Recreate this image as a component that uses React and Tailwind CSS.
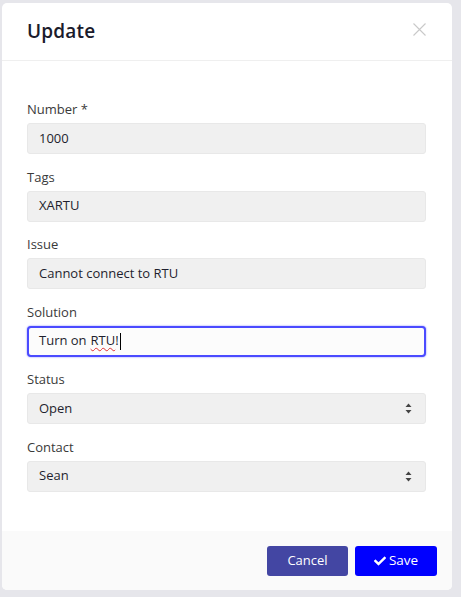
import { FaCheck } from 'react-icons/fa';

const Field = ({ label, children }) => (
  <div className="mb-[13.5px]">
    <label className="block h-[18px] leading-[18px] text-[13px] text-[#3a3a3a]">{label}</label>
    <div className="mt-[5px]">{children}</div>
  </div>
);

const TextBox = ({ value }) => (
  <div className="h-[31px] rounded-[3px] border border-[#e8e8e8] bg-[#f0f0f0] px-[11px] flex items-center text-[13px] text-[#1f1f2e]">
    {value}
  </div>
);

const SelectBox = ({ value }) => (
  <div className="h-[31px] rounded-[3px] border border-[#e8e8e8] bg-[#f0f0f0] pl-[11px] pr-[13px] flex items-center justify-between text-[13px] text-[#1f1f2e]">
    <span>{value}</span>
    <svg width="7" height="11" viewBox="0 0 7 11">
      <path d="M3.5 0.5 L6.5 4 L0.5 4 Z" fill="#444" />
      <path d="M3.5 10.5 L6.5 7 L0.5 7 Z" fill="#444" />
    </svg>
  </div>
);

export default function App() {
  return (
    <div
      className="h-[597px] w-[461px] bg-[#e6e6eb] pt-[3px] pl-[2px] overflow-hidden"
      style={{ fontFamily: '"Open Sans", "Noto Sans", sans-serif' }}
    >
      <div className="w-[450px] h-[587px] bg-white rounded-[5px] flex flex-col overflow-hidden">
        <div className="h-[58px] shrink-0 flex items-center justify-between pl-[25px] pr-[26px] border-b border-[#efefef]">
          <h2 className="text-[19px] font-semibold tracking-[0.2px] text-[#1b1b2b]">Update</h2>
          <svg width="13" height="13" viewBox="0 0 13 13" className="-mt-[5px]">
            <path d="M0.5 0.5 L12.5 12.5 M12.5 0.5 L0.5 12.5" stroke="#c9c9c9" strokeWidth="1.1" />
          </svg>
        </div>

        <div className="flex-1 pl-[25px] pr-[26px] pt-[39px]">
          <Field label="Number *">
            <TextBox value="1000" />
          </Field>
          <Field label="Tags">
            <TextBox value="XARTU" />
          </Field>
          <Field label="Issue">
            <TextBox value="Cannot connect to RTU" />
          </Field>
          <Field label="Solution">
            <div className="h-[31px] rounded-[4px] border-2 border-[#4b4bff] bg-[#fcfcfc] shadow-[0_0_2px_#8080ff] px-[10px] flex items-center text-[13px] text-[#1f1f2e]">
              Turn on{' '}
              <span className="ml-[4px] underline decoration-wavy decoration-[#e03030] decoration-1 underline-offset-2">RTU</span>
              !
              <span className="inline-block w-px h-[17px] bg-black ml-[1px]" />
            </div>
          </Field>
          <Field label="Status">
            <SelectBox value="Open" />
          </Field>
          <Field label="Contact">
            <SelectBox value="Sean" />
          </Field>
        </div>

        <div className="h-[59px] shrink-0 bg-[#fafafa] flex items-center justify-end gap-[7px] pr-[15px]">
          <button className="h-[30px] w-[81px] rounded-[3px] bg-[#4346a3] text-white text-[13px] font-medium">
            Cancel
          </button>
          <button className="h-[30px] w-[82px] rounded-[3px] bg-[#0000ff] text-white text-[13.5px] font-medium flex items-center justify-center gap-[3px]">
            <FaCheck className="w-[12px] h-[12px]" />
            Save
          </button>
        </div>
      </div>
    </div>
  );
}
